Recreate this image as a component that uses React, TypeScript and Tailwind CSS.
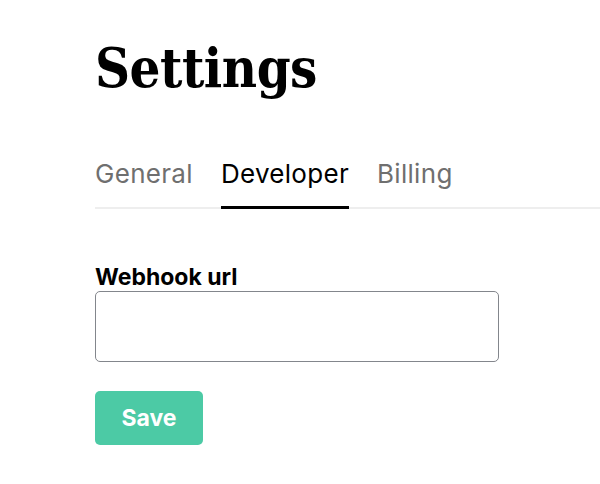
import { useState } from 'react';
import clsx from 'clsx';

const tabs = ['General', 'Developer', 'Billing'];

export default function App() {
  const [active, setActive] = useState('Developer');
  const [url, setUrl] = useState('');

  return (
    <div className="min-h-screen w-[600px] h-[484px] overflow-hidden bg-white pl-[95px] pt-[32px] font-['Inter',sans-serif]">
      <h1 className="font-['DejaVu_Serif_Condensed','DejaVu_Serif',serif] text-[54px] font-bold leading-[72px] tracking-[-0.5px] text-black">
        Settings
      </h1>

      {/* tabs */}
      <div className="mt-[53px] flex gap-[28px] border-b-2 border-[#eeeeee]">
        {tabs.map(t => (
          <button
            key={t}
            onClick={() => setActive(t)}
            className={clsx(
              'relative -mb-[2px] pb-[15px] text-[26px] leading-[34px] tracking-[0.3px] border-b-[3px]',
              active === t ? 'text-black border-black' : 'text-[#6f6f6f] border-transparent'
            )}
          >
            {t}
          </button>
        ))}
      </div>

      <div className="mt-[55px] w-[404px]">
        <label className="block text-[23px] font-bold leading-[26px] text-black">Webhook url</label>
        <input
          value={url}
          onChange={e => setUrl(e.target.value)}
          className="mt-[1px] block h-[71px] w-full rounded-[5px] border-[1.5px] border-[#83868c] px-3 outline-none"
        />
      </div>

      <button className="mt-[29px] h-[54px] w-[108px] rounded-[5px] bg-[#4ccaa5] text-[23px] font-bold text-white">
        Save
      </button>
    </div>
  );
}
